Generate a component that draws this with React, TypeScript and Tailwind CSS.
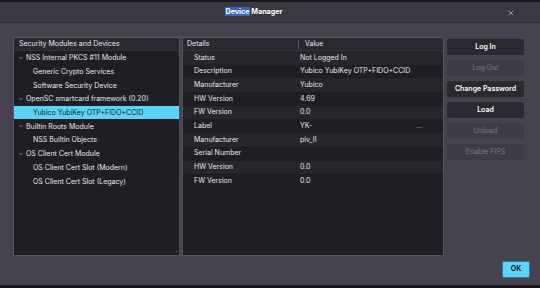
import { X, ChevronDown } from 'lucide-react'

const tree = [
    { label: 'NSS Internal PKCS #11 Module', level: 0 },
    { label: 'Generic Crypto Services', level: 1 },
    { label: 'Software Security Device', level: 1 },
    { label: 'OpenSC smartcard framework (0.20)', level: 0 },
    { label: 'Yubico YubiKey OTP+FIDO+CCID', level: 1, selected: true },
    { label: 'Builtin Roots Module', level: 0 },
    { label: 'NSS Builtin Objects', level: 1 },
    { label: 'OS Client Cert Module', level: 0 },
    { label: 'OS Client Cert Slot (Modern)', level: 1 },
    { label: 'OS Client Cert Slot (Legacy)', level: 1 },
]

const details = [
    ['Status', 'Not Logged In'],
    ['Description', 'Yubico YubiKey OTP+FIDO+CCID'],
    ['Manufacturer', 'Yubico'],
    ['HW Version', '4.69'],
    ['FW Version', '0.0'],
    ['Label', 'YK-'],
    ['Manufacturer', 'piv_II'],
    ['Serial Number', ''],
    ['HW Version', '0.0'],
    ['FW Version', '0.0'],
]

const buttons = [
    { label: 'Log In', enabled: true },
    { label: 'Log Out', enabled: false },
    { label: 'Change Password', enabled: true },
    { label: 'Load', enabled: true },
    { label: 'Unload', enabled: false },
    { label: 'Enable FIPS', enabled: false },
]

export default function App() {
    return (
        <div className="w-[540px] h-[288px] flex flex-col bg-[#45434d] text-[7px] text-[#e8e7ec] font-['Inter','Liberation_Sans',sans-serif] overflow-hidden">
            {/* top edge */}
            <div className="h-[2px] bg-[#18171c] shrink-0" />

            {/* title bar */}
            <div className="h-[21px] shrink-0 bg-[#3a3841] border-b border-[#2e2d34] flex items-center relative">
                <div className="flex-1 flex justify-center">
                    <span className="text-[7.2px] font-bold text-white ml-[-32px]">
                        <span className="bg-[#3a63b8]">Device</span> Manager
                    </span>
                </div>
                <X className="absolute right-[25px] top-[7px] w-[8px] h-[8px] text-[#d8d7dd]" strokeWidth={1.8} />
            </div>

            {/* body */}
            <div className="flex pl-[13px] pt-[14px] gap-[2px] h-[233px] shrink-0">
                {/* tree */}
                <div className="w-[167px] h-[219px] bg-[#1f1e24] border border-[#55535c] flex flex-col relative">
                    <div className="h-[13px] shrink-0 bg-[#2a2930] flex items-center pl-[5px] text-[#e8e7ec] border-b border-[#34333a]">
                        Security Modules and Devices
                    </div>
                    {tree.map((t, i) => (
                        <div
                            key={i}
                            className={`h-[13.7px] shrink-0 flex items-center ${t.selected ? 'bg-[#5cd3f4] text-[#1b1b20]' : ''} ${t.level === 1 ? 'pl-[19px]' : 'pl-[4px]'}`}
                        >
                            {t.level === 0 && <ChevronDown className="w-[6px] h-[6px] mr-[2px] text-[#bdbcc3]" strokeWidth={2.5} />}
                            <span className="leading-none">{t.label}</span>
                        </div>
                    ))}
                    <div className="absolute right-[2px] bottom-[3px] w-[1px] h-[1px] bg-[#77757e]" />
                </div>

                {/* details table */}
                <div className="w-[262px] h-[219px] bg-[#1f1e24] border border-[#55535c] flex flex-col">
                    <div className="h-[13px] shrink-0 bg-[#2a2930] flex items-center border-b border-[#34333a]">
                        <div className="w-[115px] pl-[4px]">Details</div>
                        <div className="w-px h-[9px] bg-[#5a5960]" />
                        <div className="pl-[6px]">Value</div>
                    </div>
                    {details.map(([k, v], i) => (
                        <div
                            key={i}
                            className={`h-[13.7px] shrink-0 flex items-center ${i % 2 === 0 ? 'bg-[#27262d]' : ''}`}
                        >
                            <div className="w-[116px] pl-[11px]">{k}</div>
                            <div className="flex-1 pl-[1px]">{v}</div>
                            {k === 'Label' && <div className="w-[27px] text-[#9a99a1]">...</div>}
                        </div>
                    ))}
                </div>

                {/* buttons */}
                <div className="w-[78px] flex flex-col gap-[5px] pt-[2px] pl-[1px]">
                    {buttons.map(b => (
                        <div
                            key={b.label}
                            className={`h-[16px] rounded-[2px] flex items-center justify-center ${b.enabled ? 'bg-[#2a2930] text-white font-semibold' : 'bg-[#3e3c46] text-[#7b7983]'}`}
                        >
                            {b.label}
                        </div>
                    ))}
                </div>
            </div>

            {/* footer */}
            <div className="flex justify-end pr-[10px] pt-[5px]">
                <div className="w-[28px] h-[17px] rounded-[2px] bg-[#5fd3f4] border border-[#2c7fa0] flex items-center justify-center text-[#1a1b22] font-bold">
                    OK
                </div>
            </div>
            <div className="flex-1" />
            <div className="h-[3px] bg-[#18171c] shrink-0" />
        </div>
    )
}
